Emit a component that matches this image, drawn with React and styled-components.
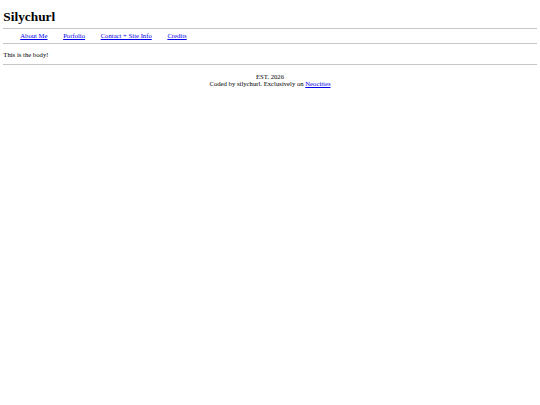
import React from 'react'
import styled, {createGlobalStyle} from 'styled-components'

const links = ['About Me', 'Porfolio', 'Contact + Site Info', 'Credits']

const App = () => {
  return (
    <>
      <Global />
      <Page>
        <Title>Silychurl</Title>
        <Rule />
        <Nav>
          {links.map((l) => (
            <NavItem key={l}>
              <Link href="#">{l}</Link>
            </NavItem>
          ))}
        </Nav>
        <Rule />
        <Body>This is the body!</Body>
        <Rule />
        <Footer>
          EST. 2026
          <br />
          Coded by silychurl. Exclusively on <Link href="#">Neocities</Link>
        </Footer>
      </Page>
    </>
  )
}

export default App

const Global = createGlobalStyle`
html, body {
  margin: 0;
  background: #fff;
}
body {
  font-family: "Liberation Serif", "Times New Roman", serif;
  font-size: 6.7px;
  color: #000;
}
`

// whole page is the default html look shrunk to about 0.42
const Page = styled.div`
margin: 3.33px;
`
const Title = styled.h1`
font-size: 13.33px;
font-weight: bold;
margin: 8.93px 0 0;
`
const Rule = styled.hr`
margin: 3.33px 0;
border: none;
border-top: 1px solid #c6c6c6;
height: 0;
`
const Nav = styled.ul`
display: flex;
gap: 15.6px;
list-style: none;
margin: -1px 0 4.33px;
padding: 0 0 0 16.9px;
`
const NavItem = styled.li`
line-height: normal;
`
const Link = styled.a`
color: #0000ee;
text-decoration: underline;
`
const Body = styled.p`
margin: 6.67px 0;
`
const Footer = styled.p`
margin: 7.6px 0 6.67px;
text-align: center;
`
